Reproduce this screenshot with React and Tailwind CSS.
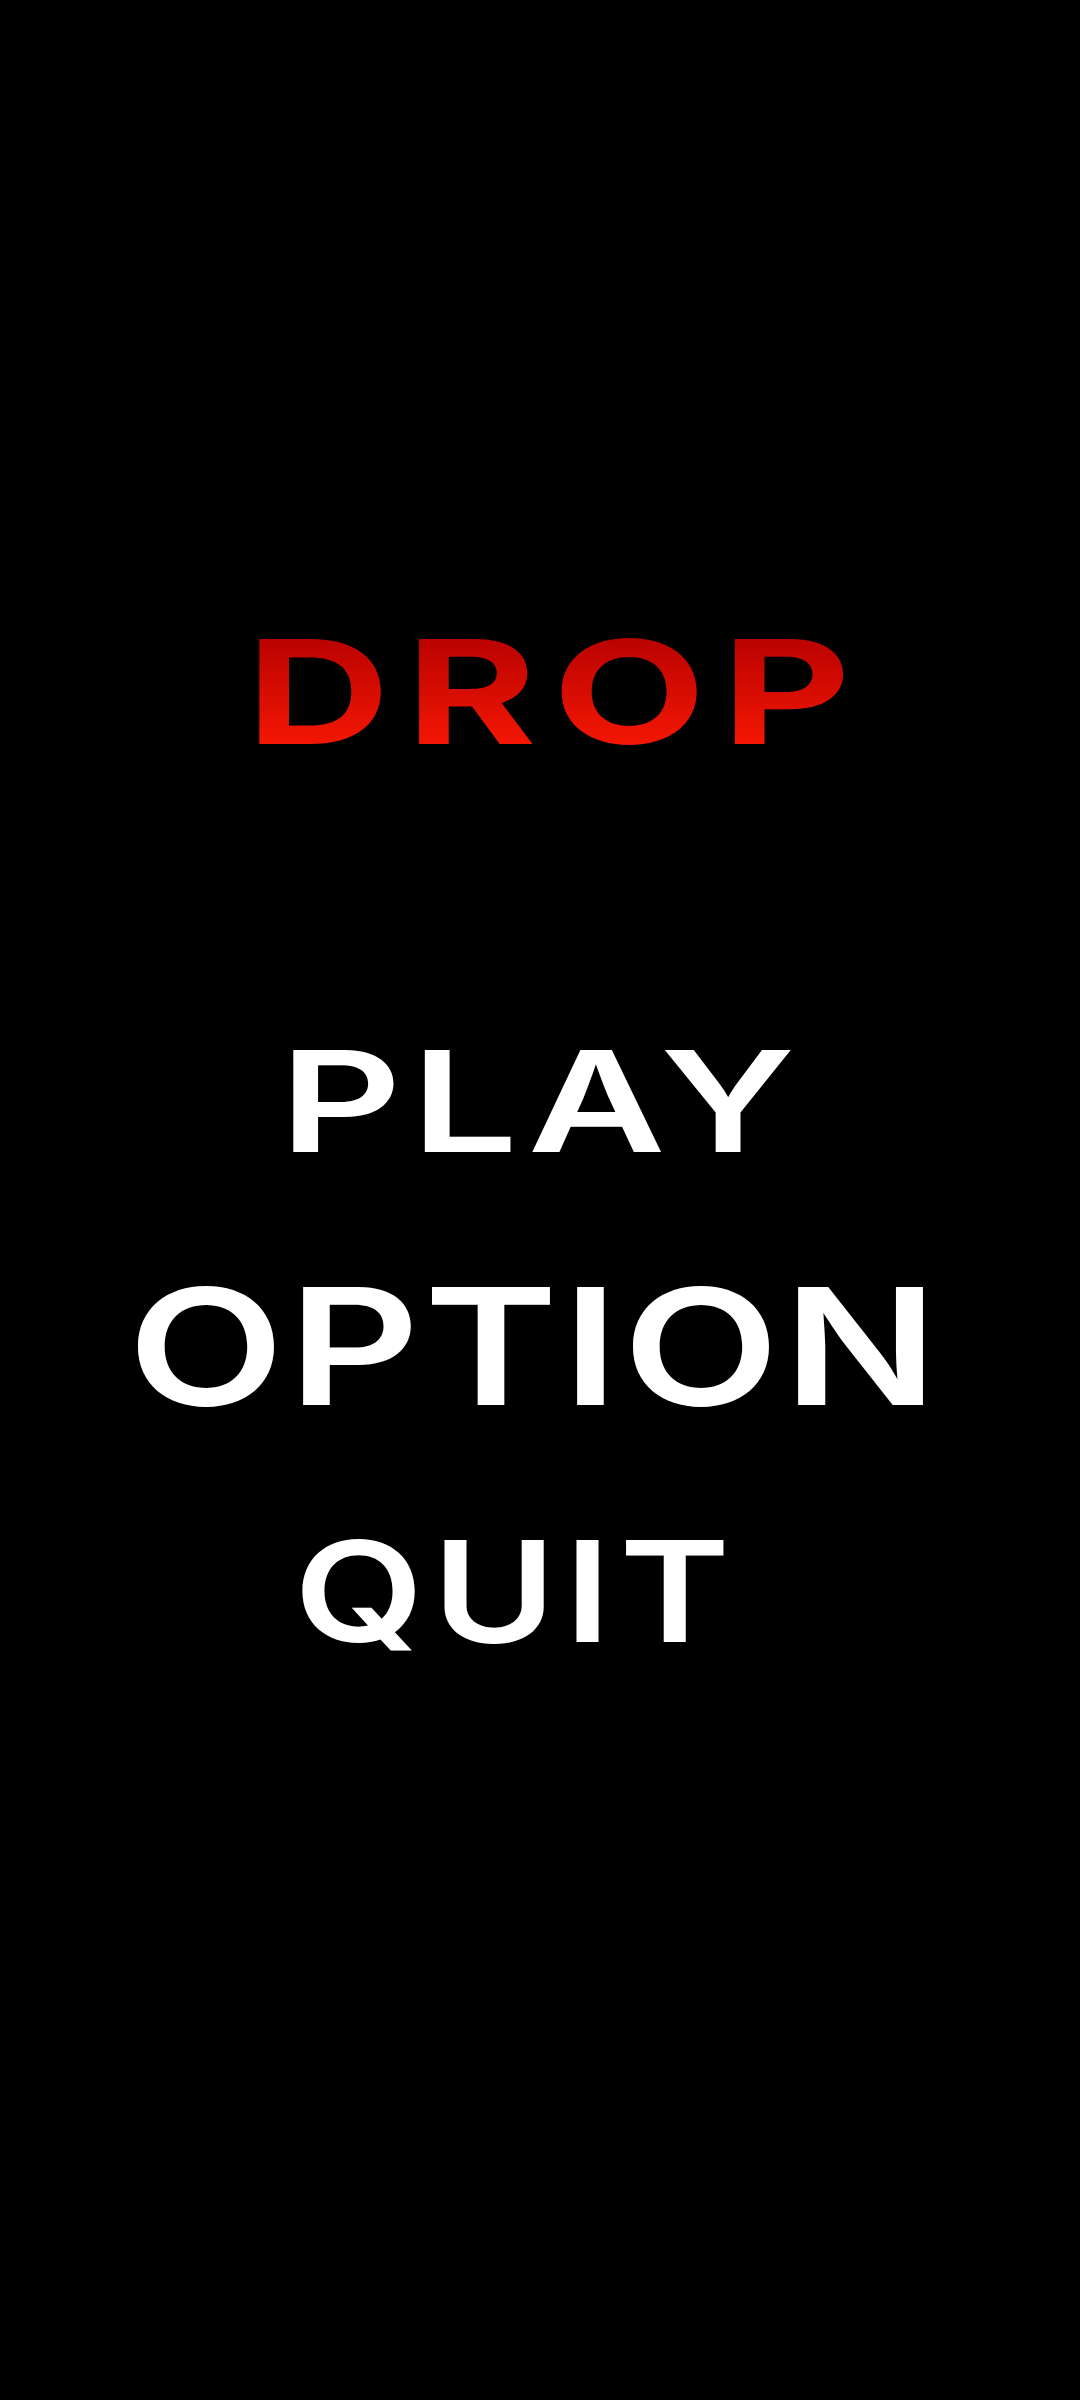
export default function App() {
  return (
    <div className="min-h-[2400px] w-full bg-black font-['Inter',sans-serif]">
      <main className="flex flex-col items-center pt-[620px]">
        {/* title */}
        <h1 className="ml-[33px] inline-block origin-center scale-x-[1.382] bg-linear-to-b from-[#b00000] to-[#ff1a05] bg-clip-text text-[144px] font-bold leading-none tracking-[0.08em] text-transparent">
          DROP
        </h1>

        {/* menu */}
        <nav className="mt-[267px] flex flex-col items-center gap-[94px] font-semibold text-white">
          <button className="ml-[5px] inline-block origin-center scale-x-[1.353] text-[140px] leading-none tracking-[0.05em]">
            PLAY
          </button>
          <button className="ml-[-11px] inline-block origin-center scale-x-[1.257] text-[162px] leading-none tracking-[0.02em]">
            OPTION
          </button>
          <button className="ml-[-47px] inline-block origin-center scale-x-[1.2] text-[140px] leading-none tracking-[0.05em]">
            QUIT
          </button>
        </nav>
      </main>
    </div>
  );
}
